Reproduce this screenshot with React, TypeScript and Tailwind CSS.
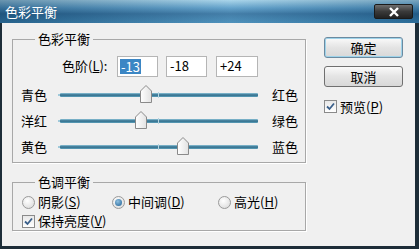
import React from 'react'

const font = { fontFamily: '"Noto Sans CJK SC", "Liberation Sans", sans-serif' }

interface SliderRow {
  left: string
  right: string
  value: number
}

const rows: SliderRow[] = [
  { left: '青色', right: '红色', value: -13 },
  { left: '洋红', right: '绿色', value: -18 },
  { left: '黄色', right: '蓝色', value: 24 },
]

function Thumb({ value }: { value: number }) {
  // track is 198px wide, -100..100
  const x = 99 + value * 0.99 - 6
  return (
    <svg
      width="12"
      height="18"
      viewBox="0 0 12 18"
      className="absolute top-[-8px]"
      style={{ left: x }}
    >
      <defs>
        <linearGradient id="thumbfill" x1="0" x2="1" y1="0" y2="0">
          <stop offset="0" stopColor="#ffffff" />
          <stop offset="1" stopColor="#e2e2e2" />
        </linearGradient>
      </defs>
      <path d="M0.5 6 L6 0.5 L11.5 6 L11.5 17.5 L0.5 17.5 Z" fill="url(#thumbfill)" stroke="#8a8a8a" />
    </svg>
  )
}

function Track({ value }: { value: number }) {
  return (
    <div className="relative shrink-0 w-[198px] h-[4px] rounded-[1px] bg-[linear-gradient(to_bottom,#8fc6da,#2f6b89_50%,#5fa2bd)]">
      <div className="absolute left-[-2px] top-[1px] w-[2px] h-[2px] bg-[#9fc9da]" />
      <div className="absolute left-[98px] top-[-1px] w-[1px] h-[6px] bg-[#b8d4e0]" />
      <Thumb value={value} />
    </div>
  )
}

function Radio({ checked }: { checked?: boolean }) {
  return (
    <span className="shrink-0 w-[13px] h-[13px] rounded-full border border-[#9a9a9a] bg-[radial-gradient(circle_at_40%_35%,#ffffff,#d6d6d6)] flex items-center justify-center">
      {checked && <span className="w-[7px] h-[7px] rounded-full bg-[radial-gradient(circle_at_40%_35%,#8fc0e0,#1d5f94)]" />}
    </span>
  )
}

function Check() {
  return (
    <span className="shrink-0 w-[13px] h-[13px] border border-[#8a8a8a] bg-[linear-gradient(to_bottom,#e8e8e8,#ffffff)] flex items-center justify-center">
      <svg width="9" height="9" viewBox="0 0 9 9">
        <path d="M1 4.5 L3.5 7 L8 1.5" fill="none" stroke="#3a5f8a" strokeWidth="1.8" />
      </svg>
    </span>
  )
}

function Button({ label, primary }: { label: string; primary?: boolean }) {
  return (
    <button
      className={
        primary
          ? 'w-[79px] h-[21px] rounded-[3px] border border-[#6b8aa0] shadow-[inset_0_0_0_1px_#9ed3ea] bg-[linear-gradient(to_bottom,#fafafa,#e4e4e4_50%,#d8d8d8)] text-[13px] leading-[19px] text-black'
          : 'w-[79px] h-[21px] rounded-[3px] border border-[#707070] bg-[linear-gradient(to_bottom,#fafafa,#e4e4e4_50%,#d8d8d8)] text-[13px] leading-[19px] text-black'
      }
    >
      {label}
    </button>
  )
}

export default function App() {
  return (
    <div className="w-[419px] h-[249px] flex flex-col bg-[#1d2d38] overflow-hidden" style={font}>
      {/* Title bar */}
      <div className="h-[23px] flex items-center justify-between pl-[5px] pr-[6px] bg-[linear-gradient(to_right,rgba(10,40,70,0.35),rgba(255,255,255,0.12)_55%,rgba(10,40,70,0.25)),linear-gradient(to_bottom,#9fd0e8,#4f96c4_35%,#2a6c9c_60%,#3784b4)]">
        <span className="text-white text-[13px] leading-none">色彩平衡</span>
        <div className="w-[39px] h-[15px] rounded-[2px] border border-[#1a1a1a] bg-[linear-gradient(to_bottom,#6e6e6e,#3a3a3a_50%,#222)] flex items-center justify-center">
          <svg width="12" height="10" viewBox="0 0 12 10">
            <path d="M2 1 L10 9 M10 1 L2 9" stroke="#ffffff" strokeWidth="2.4" />
          </svg>
        </div>
      </div>

      {/* Body */}
      <div className="flex-1 ml-[2px] mr-[4px] mb-[3px] bg-[#f0f0f0] flex pl-[10px] pt-[9px] gap-[18px] text-[13px] text-black whitespace-nowrap">
        <div className="flex flex-col w-[294px] shrink-0">
          <fieldset className="h-[131px] border border-[#a8a8a8] shadow-[1px_1px_0_#ffffff] pl-[8px]">
            <legend className="ml-[14px] px-[3px] leading-[14px]">色彩平衡</legend>
            <div className="flex items-center h-[22px] mt-[9px]">
              <span className="ml-[41px] w-[55px]">色阶(<u>L</u>):</span>
              <div className="w-[41px] h-[21px] border border-[#b5b5b5] bg-white flex items-center pl-[2px]">
                <span className="bg-[#3b86c4] text-white leading-[15px] px-[1px]">-13</span>
              </div>
              <div className="ml-[8px] w-[41px] h-[21px] border border-[#b5b5b5] bg-white flex items-center pl-[3px]">-18</div>
              <div className="ml-[9px] w-[42px] h-[21px] border border-[#b5b5b5] bg-white flex items-center pl-[3px]">+24</div>
            </div>
            <div className="flex flex-col gap-[12px] mt-[11px]">
              {rows.map(r => (
                <div key={r.left} className="flex items-center h-[14px]">
                  <span className="w-[39px] shrink-0 leading-[14px]">{r.left}</span>
                  <Track value={r.value} />
                  <span className="ml-[14px] leading-[14px]">{r.right}</span>
                </div>
              ))}
            </div>
          </fieldset>

          <fieldset className="mt-[12px] h-[56px] border border-[#a8a8a8] shadow-[1px_1px_0_#ffffff] pl-[9px]">
            <legend className="ml-[13px] px-[3px] leading-[14px]">色调平衡</legend>
            <div className="flex items-center h-[16px] mt-[5px]">
              <Radio />
              <span className="ml-[3px] w-[74px]">阴影(<u>S</u>)</span>
              <Radio checked />
              <span className="ml-[3px] w-[90px]">中间调(<u>D</u>)</span>
              <Radio />
              <span className="ml-[3px]">高光(<u>H</u>)</span>
            </div>
            <div className="flex items-center h-[16px] mt-[3px]">
              <Check />
              <span className="ml-[3px]">保持亮度(<u>V</u>)</span>
            </div>
          </fieldset>
        </div>

        <div className="flex flex-col pt-[5px]">
          <Button label="确定" primary />
          <div className="mt-[8px]">
            <Button label="取消" />
          </div>
          <div className="flex items-center mt-[10px]">
            <Check />
            <span className="ml-[3px]">预览(<u>P</u>)</span>
          </div>
        </div>
      </div>
    </div>
  )
}
